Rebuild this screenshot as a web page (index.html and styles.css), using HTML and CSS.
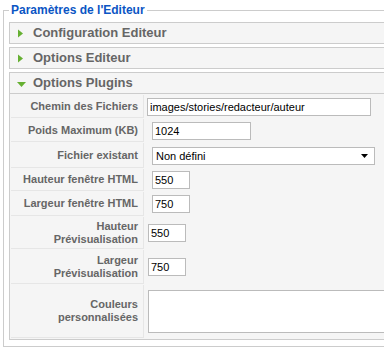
FILE: index.html
```html
<!DOCTYPE html>
<html lang="fr">
<head>
<meta charset="utf-8">
<title>Paramètres de l'Editeur</title>
<link rel="stylesheet" href="styles.css">
</head>
<body>
<div class="page">
  <fieldset class="adminform">
    <legend>Paramètres de l'Editeur</legend>
    <div class="pane-sliders">
      <div class="panel">
        <h3 class="panel-title">
          <svg class="arrow" width="9" height="9" viewBox="0 0 9 9"><polygon points="1,0.5 6,4.5 1,8.5" fill="#66b032"/></svg>
          <span>Configuration Editeur</span>
        </h3>
      </div>
      <div class="panel">
        <h3 class="panel-title">
          <svg class="arrow" width="9" height="9" viewBox="0 0 9 9"><polygon points="1,0.5 6,4.5 1,8.5" fill="#66b032"/></svg>
          <span>Options Editeur</span>
        </h3>
      </div>
      <div class="panel">
        <h3 class="panel-title">
          <svg class="arrow" width="9" height="9" viewBox="0 0 9 9"><polygon points="0,3 9,3 4.5,8" fill="#66b032"/></svg>
          <span>Options Plugins</span>
        </h3>
        <div class="panel-content">
          <table class="paramlist">
            <tr class="r1">
              <td class="key">Chemin des Fichiers</td>
              <td class="value"><input class="field path" type="text" value="images/stories/redacteur/auteur"></td>
            </tr>
            <tr class="r2">
              <td class="key">Poids Maximum (KB)</td>
              <td class="value"><input class="field shifted size" type="text" value="1024"></td>
            </tr>
            <tr class="r3">
              <td class="key">Fichier existant</td>
              <td class="value">
                <div class="select shifted">
                  <span>Non défini</span>
                  <svg width="7" height="4" viewBox="0 0 7 4"><polygon points="0,0 7,0 3.5,4" fill="#000"/></svg>
                </div>
              </td>
            </tr>
            <tr class="r4">
              <td class="key">Hauteur fenêtre HTML</td>
              <td class="value"><input class="field shifted small" type="text" value="550"></td>
            </tr>
            <tr class="r5">
              <td class="key">Largeur fenêtre HTML</td>
              <td class="value"><input class="field shifted small" type="text" value="750"></td>
            </tr>
            <tr class="r6">
              <td class="key">Hauteur<br>Prévisualisation</td>
              <td class="value"><input class="field small mid" type="text" value="550"></td>
            </tr>
            <tr class="r7">
              <td class="key">Largeur<br>Prévisualisation</td>
              <td class="value"><input class="field small mid" type="text" value="750"></td>
            </tr>
            <tr class="r8">
              <td class="key">Couleurs<br>personnalisées</td>
              <td class="value"><textarea class="area mid"></textarea></td>
            </tr>
          </table>
        </div>
      </div>
    </div>
  </fieldset>
</div>
</body>
</html>
```

FILE: styles.css
```css
html, body {
  margin: 0;
  padding: 0;
  background: #fff;
  overflow: hidden;
}

body {
  font-family: "Liberation Sans", Arial, sans-serif;
}

.page {
  width: 430px;
}

.adminform {
  margin: 3px 0 0 3px;
  padding: 5px 5px 6px 5px;
  border: 1px solid #ccc;
  min-width: 0;
}

.adminform legend {
  padding: 0 2px;
  font-size: 12px;
  line-height: 14px;
  font-weight: bold;
  color: #0b55c4;
}

.panel {
  border: 1px solid #ccc;
  margin-bottom: 3px;
}

.panel:last-child {
  margin-bottom: 0;
}

.panel-title {
  margin: 0;
  height: 20px;
  display: flex;
  align-items: center;
  background: #f5f5f5;
  font-size: 13px;
  line-height: 20px;
  font-weight: bold;
  color: #666;
}

.arrow {
  margin-left: 7px;
  margin-right: 7px;
  flex: none;
}

.panel-content {
  border-top: 1px solid #ccc;
  background: #f5f5f5;
}

.paramlist {
  border-spacing: 1px;
  width: 100%;
}

.paramlist td {
  padding: 0;
}

.paramlist td.key {
  width: 127px;
  padding: 0 5px 0 0;
  border-right: 1px solid #e6e6e6;
  border-bottom: 1px solid #e6e6e6;
  background: #f5f5f5;
  text-align: right;
  vertical-align: middle;
  font-size: 11px;
  line-height: 13px;
  font-weight: bold;
  color: #666;
}

.paramlist td.value {
  padding-left: 2px;
  vertical-align: middle;
}

.r1 td { height: 22px; }
.r2 td { height: 22px; }
.r3 td { height: 24px; }
.r4 td { height: 21px; }
.r5 td { height: 23px; }
.r6 td { height: 31px; }
.r7 td { height: 33px; }
.r8 td { height: 52px; }

.field {
  display: block;
  box-sizing: border-box;
  height: 18px;
  margin: 0;
  padding: 0 2px;
  border: 1px solid #bbb;
  background: #fff;
  font-family: "Liberation Sans", Arial, sans-serif;
  font-size: 11px;
  color: #000;
  outline: none;
}

.shifted {
  margin-left: 5px;
}

.mid {
  margin-left: 1px;
}

.path {
  width: 224px;
}

.size {
  width: 99px;
}

.small {
  width: 38px;
}

.select {
  box-sizing: border-box;
  width: 223px;
  height: 18px;
  display: flex;
  align-items: center;
  justify-content: space-between;
  padding: 0 6px 0 3px;
  border: 1px solid #bbb;
  background: #fff;
  font-size: 11px;
  color: #000;
}

.area {
  display: block;
  box-sizing: border-box;
  width: 260px;
  height: 43px;
  margin-top: 0;
  margin-bottom: 0;
  padding: 2px;
  border: 1px solid #bbb;
  background: #fff;
  resize: none;
  outline: none;
}
```
